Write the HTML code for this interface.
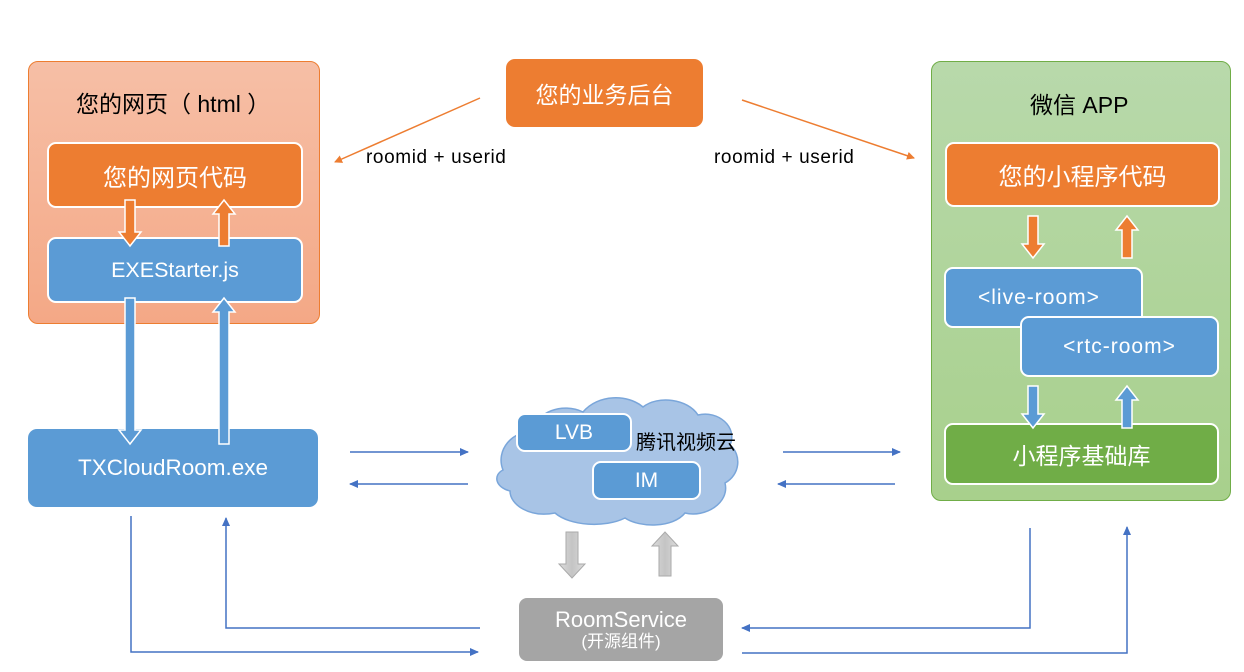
<!DOCTYPE html>
<html><head><meta charset="utf-8"><style>
body{margin:0;width:1244px;height:672px;background:#fff;position:relative;overflow:hidden;font-family:"Liberation Sans","Noto Sans CJK SC",sans-serif}
.a{position:absolute;box-sizing:border-box;display:flex;align-items:center;justify-content:center;color:#fff}
.b{border:2px solid #fff;border-radius:9px}
.t{position:absolute;white-space:nowrap}
</style></head><body>
<div class="a" style="left:28px;top:61px;width:292px;height:263px;border:1px solid #ed7d31;border-radius:10px;background:linear-gradient(#f6bfa6,#f4a886)"></div>
<div class="t" style="left:76px;top:85px;font-size:23px;color:#000">您的网页（ html ）</div>
<div class="a b" style="left:47px;top:142px;width:256px;height:66px;background:#ed7d31;font-size:24px">您的网页代码</div>
<div class="a b" style="left:47px;top:237px;width:256px;height:66px;background:#5b9bd5;font-size:21.5px">EXEStarter.js</div>
<div class="a" style="left:28px;top:429px;width:290px;height:78px;border-radius:9px;background:#5b9bd5;font-size:22.5px">TXCloudRoom.exe</div>
<div class="a" style="left:506px;top:59px;width:197px;height:68px;border-radius:9px;background:#ed7d31;font-size:23px">您的业务后台</div>
<div class="t" style="left:366px;top:147px;font-size:19px;letter-spacing:0.6px">roomid + userid</div>
<div class="t" style="left:714px;top:147px;font-size:19px;letter-spacing:0.6px">roomid + userid</div>
<div class="a" style="left:931px;top:61px;width:300px;height:440px;border:1px solid #70ad47;border-radius:10px;background:linear-gradient(#b8d9ab,#a8d08c)"></div>
<div class="t" style="left:1030px;top:86px;font-size:23px;color:#000">微信 APP</div>
<div class="a b" style="left:945px;top:142px;width:275px;height:65px;background:#ed7d31;font-size:24px">您的小程序代码</div>
<div class="a b" style="left:944px;top:267px;width:199px;height:61px;background:#5b9bd5;font-size:21px;letter-spacing:1px;justify-content:flex-start;padding-left:32px;align-items:flex-start;padding-top:17px">&lt;live-room&gt;</div>
<div class="a b" style="left:1020px;top:316px;width:199px;height:61px;background:#5b9bd5;font-size:21px;letter-spacing:1px">&lt;rtc-room&gt;</div>
<div class="a b" style="left:944px;top:423px;width:275px;height:62px;background:#70ad47;font-size:23px">小程序基础库</div>
<svg class="t" style="left:0;top:0" width="1244" height="672">
<defs>
<marker id="ob" markerWidth="8" markerHeight="8" refX="7" refY="4" orient="auto" markerUnits="userSpaceOnUse"><path d="M0,0L8,4L0,8z" fill="#ed7d31"/></marker>
<marker id="bb" markerWidth="9" markerHeight="8" refX="8" refY="4" orient="auto" markerUnits="userSpaceOnUse"><path d="M0,0L9,4L0,8z" fill="#4472c4"/></marker>
<linearGradient id="gg" x1="0" x2="1"><stop offset="0" stop-color="#dcdcdc"/><stop offset=".5" stop-color="#c4c4c4"/><stop offset="1" stop-color="#dcdcdc"/></linearGradient>
</defs>
<path d="M503,470c-8-20 10-40 30-38c2-20 30-30 50-20c15-18 45-18 60-5c15-12 45-8 55 8c20-5 40 12 32 30c12 10 10 30-5 38c5 20-20 35-40 30c-12 15-45 15-60 5c-20 10-55 8-70-5c-25 5-45-8-45-22c-15-4-17-16-7-21z" fill="#a8c4e6" stroke="#7aa6da" stroke-width="1.5"/>
<line x1="480" y1="98" x2="335" y2="162" stroke="#ed7d31" stroke-width="1.5" marker-end="url(#ob)"/>
<line x1="742" y1="100" x2="914" y2="158" stroke="#ed7d31" stroke-width="1.5" marker-end="url(#ob)"/>
<g stroke="#4472c4" stroke-width="1.5" fill="none" marker-end="url(#bb)">
<line x1="350" y1="452" x2="468" y2="452"/><line x1="468" y1="484" x2="350" y2="484"/>
<line x1="783" y1="452" x2="900" y2="452"/><line x1="895" y1="484" x2="778" y2="484"/>
<polyline points="131,516 131,652 478,652"/><polyline points="480,628 226,628 226,518"/>
<polyline points="1030,528 1030,628 742,628"/><polyline points="742,653 1127,653 1127,527"/>
</g>
<g stroke="#fff" stroke-width="1.5">
<path d="M125,200h10v32h6l-11,14l-11-14h6z" fill="#ed7d31"/>
<path d="M219,246h10v-32h6l-11-14l-11,14h6z" fill="#ed7d31"/>
<path d="M125,298h10v132h6l-11,14l-11-14h6z" fill="#5b9bd5"/>
<path d="M219,444h10v-132h6l-11-14l-11,14h6z" fill="#5b9bd5"/>
<path d="M1028,216h10v28h6l-11,14l-11-14h6z" fill="#ed7d31"/>
<path d="M1122,258h10v-28h6l-11-14l-11,14h6z" fill="#ed7d31"/>
<path d="M1028,386h10v28h6l-11,14l-11-14h6z" fill="#5b9bd5"/>
<path d="M1122,428h10v-28h6l-11-14l-11,14h6z" fill="#5b9bd5"/>
</g>
<path d="M566,532h12v32h7l-13,14l-13-14h7z" fill="url(#gg)" stroke="#aaa"/>
<path d="M659,576h12v-30h7l-13-14l-13,14h7z" fill="url(#gg)" stroke="#aaa"/>
</svg>
<div class="a b" style="left:516px;top:413px;width:116px;height:39px;background:#5b9bd5;font-size:21px">LVB</div>
<div class="a b" style="left:592px;top:461px;width:109px;height:39px;background:#5b9bd5;font-size:21px">IM</div>
<div class="t" style="left:636px;top:426px;font-size:20px">腾讯视频云</div>
<div class="a" style="left:519px;top:598px;width:204px;height:63px;border-radius:8px;background:#a5a5a5;flex-direction:column;line-height:1.15"><span style="font-size:22px">RoomService</span><span style="font-size:17px">(开源组件)</span></div>
</body></html>
